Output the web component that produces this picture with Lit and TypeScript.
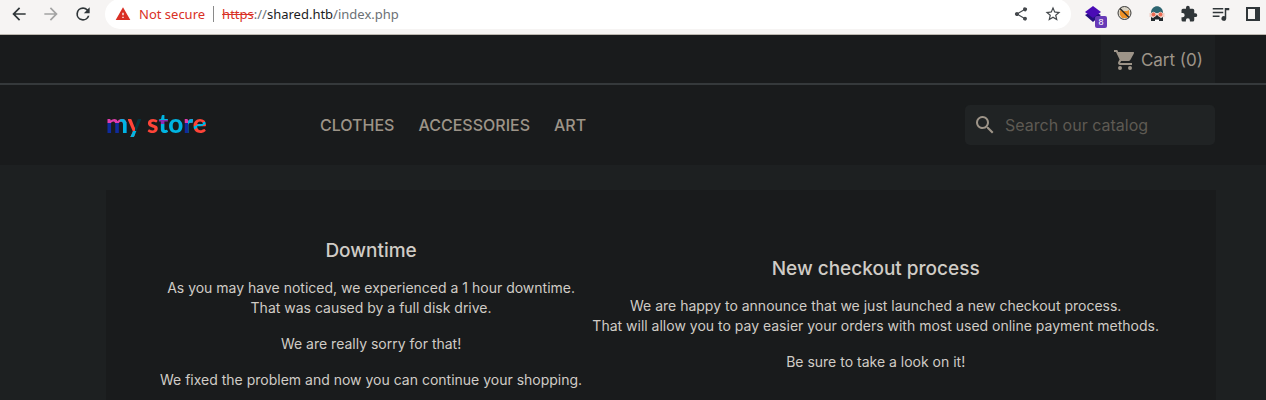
import { LitElement, html, css, svg } from "lit";
import { customElement } from "lit/decorators.js";

const icon = (size: number, body: unknown) =>
  html`<svg width=${size} height=${size} viewBox="0 0 24 24" fill="currentColor" aria-hidden="true">${body}</svg>`;

const glyphs = {
  back: svg`<path d="M20 11H7.83l5.59-5.59L12 4l-8 8 8 8 1.41-1.41L7.83 13H20v-2z"/>`,
  forward: svg`<path d="M12 4l-1.41 1.41L16.17 11H4v2h12.17l-5.58 5.59L12 20l8-8z"/>`,
  reload: svg`<path d="M17.65 6.35A7.96 7.96 0 0 0 12 4a8 8 0 1 0 7.73 10h-2.08A6 6 0 1 1 12 6c1.66 0 3.14.69 4.22 1.78L13 11h7V4l-2.35 2.35z"/>`,
  warning: svg`<path d="M1 21h22L12 2 1 21zm12-3h-2v-2h2v2zm0-4h-2v-4h2v4z"/>`,
  share: svg`<path d="M18 16.08c-.76 0-1.44.3-1.96.77L8.91 12.7a3.3 3.3 0 0 0 0-1.39l7.05-4.11A2.99 2.99 0 1 0 15 5c0 .24.04.47.09.7L8.04 9.81a3 3 0 1 0 0 4.38l7.12 4.16a2.92 2.92 0 1 0 2.84-2.27z"/>`,
  star: svg`<path d="M22 9.24l-7.19-.62L12 2 9.19 8.63 2 9.24l5.46 4.73L5.82 21 12 17.27 18.18 21l-1.63-7.03L22 9.24zM12 15.4l-3.76 2.27 1-4.28-3.32-2.88 4.38-.38L12 6.1l1.71 4.04 4.38.38-3.32 2.88 1 4.28L12 15.4z"/>`,
  puzzle: svg`<path d="M20.5 11H19V7a2 2 0 0 0-2-2h-4V3.5a2.5 2.5 0 0 0-5 0V5H4a2 2 0 0 0-2 2v3.8h1.5a2.7 2.7 0 0 1 0 5.4H2V20a2 2 0 0 0 2 2h3.8v-1.500a2.700 2.700 0 0 1 5.400 0V22H17a2 2 0 0 0 2-2v-4h1.500a2.500 2.500 0 0 0 0-5z"/>`,
  queue: svg`<path d="M1 4h14v2H1zM1 9h14v2H1zM1 14h9v2H1zM17 4h6v3h-4v11a3.200 3.200 0 1 1-2-3z"/>`,
  cart: svg`<path d="M7 18a2 2 0 1 0 0 4 2 2 0 0 0 0-4zM1 2v2h2l3.600 7.590-1.350 2.450C4.520 15.370 5.480 17 7 17h12v-2H7.420a.25.25 0 0 1-.25-.25l.03-.12.9-1.630h7.450c.75 0 1.410-.41 1.750-1.030l3.580-6.490A1 1 0 0 0 20 4H5.210l-.94-2H1zm16 16a2 2 0 1 0 0 4 2 2 0 0 0 0-4z"/>`,
  search: svg`<path d="M15.500 14h-.79l-.28-.27a6.500 6.500 0 1 0-.7.700l.27.280v.79l5 4.990L20.490 19l-4.990-5zm-6 0a4.500 4.500 0 1 1 0-9 4.500 4.500 0 0 1 0 9z"/>`,
};

@customElement("browser-bar")
class BrowserBar extends LitElement {
  static styles = css`
    :host { display: block; font-family: "Noto Sans", sans-serif; }
    .bar {
      box-sizing: border-box; height: 35px; padding: 0 4px 6px 9px; display: flex; align-items: center;
      background: #f6f4f3; border-bottom: 1px solid #bdb8b0; color: #303639;
    }
    button { border: 0; padding: 0; background: none; color: inherit; display: flex; }
    svg { display: block; }
    .nav { display: flex; gap: 12px; margin-right: 12px; }
    .off { color: #a3a3a3; }
    .address {
      flex: 1; height: 30px; border-radius: 15px; background: #fff; display: flex;
      align-items: center; font-size: 13px; gap: 8px; padding: 0 9px 0 10px;
      min-width: 0; white-space: nowrap;
    }
    .danger { color: #d93025; display: flex; align-items: center; gap: 8px; }
    .rule { width: 1px; height: 16px; background: #8a8a8a; }
    .url { flex: 1; color: #6c7175; }
    .url s { color: #d93025; }
    .url b { color: #1b1c1e; font-weight: 400; }
    .tools { display: flex; align-items: center; gap: 15px; color: #44484c; }
    .extensions { display: flex; gap: 14px; margin-left: 13px; align-items: center; }
    .blocks { position: relative; }
    .badge {
      position: absolute; left: 11px; top: 11px; width: 12px; height: 12px; border-radius: 2px;
      background: #673ab7; color: #fff; font-size: 9px; line-height: 12px; text-align: center;
    }
  `;

  render() {
    return html`
      <div class="bar">
        <div class="nav">
          <button aria-label="Back">${icon(20, glyphs.back)}</button>
          <button class="off" aria-label="Forward" disabled>${icon(20, glyphs.forward)}</button>
          <button aria-label="Reload">${icon(20, glyphs.reload)}</button>
        </div>
        <div class="address">
          <span class="danger">${icon(16, glyphs.warning)}Not secure</span>
          <span class="rule"></span>
          <span class="url"><s>https</s>://<b>shared.htb</b>/index.php</span>
          <span class="tools">
            <button aria-label="Share">${icon(16, glyphs.share)}</button>
            <button aria-label="Bookmark">${icon(18, glyphs.star)}</button>
          </span>
        </div>
        <div class="extensions">
          <button class="blocks" aria-label="Blocks">
            <svg width="18" height="18" viewBox="0 0 18 18"><path fill="#24107c" d="M1 10l4-2h8l4 2-8 7z"/><path fill="#4a0bb5" d="M1 7l8-6 8 6-8 6z"/></svg>
            <span class="badge">8</span>
          </button>
          <button aria-label="Proxy">
            <svg width="18" height="18" viewBox="0 0 18 18"><circle cx="8.500" cy="8" r="6.500" fill="#d9d3c5" stroke="#3c3c3a"/><path fill="#ee9226" d="M4 5l2 1h5l2-1v5l-2 3H6l-2-3z"/><path stroke="#2c2c2a" stroke-width="1.500" d="M4 3.500l9 9"/></svg>
          </button>
          <button aria-label="Disguise">
            <svg width="18" height="18" viewBox="0 0 18 18"><path fill="#2d6570" d="M3 8c0-9 12-9 12 0z"/><path fill="#f0cfc4" d="M1.500 8h15v4h-15z"/><path fill="#242a2e" d="M3 12l2 1 4-3 4 3 2-1v4H3z"/><path fill="#fff" d="M7 14.500h4V16H7z"/><g fill="#ec6a52" stroke="#f0cfc4" stroke-width=".8"><circle cx="5.500" cy="9.500" r="2.300"/><circle cx="12.500" cy="9.500" r="2.300"/></g></svg>
          </button>
          <button aria-label="Extensions">${icon(18, glyphs.puzzle)}</button>
          <button aria-label="Media">${icon(18, glyphs.queue)}</button>
          <button aria-label="Side panel">
            <svg width="18" height="18" viewBox="0 0 18 18"><path fill="#303639" fill-rule="evenodd" d="M2 2h14v14H2zM4 4v10h7V4z"/></svg>
          </button>
        </div>
      </div>
    `;
  }
}

@customElement("store-header")
class StoreHeader extends LitElement {
  static styles = css`
    :host { display: block; color: #9d9488; background: #191b1c; }
    a { color: inherit; text-decoration: none; }
    .inner { padding: 0 51px 0 106px; display: flex; align-items: center; }
    .top { height: 48px; justify-content: flex-end; border-bottom: 2px solid #35393b; }
    .cart {
      box-sizing: border-box; height: 48px; padding: 2px 12px 0; display: flex; align-items: center; gap: 4px;
      background: #1d2021; font-size: 17px;
    }
    .main { height: 80px; }
    .logo { width: 214px; padding-bottom: 4px; font: 900 26px/32px Lato, sans-serif; white-space: nowrap; }
    .logo span { background-clip: text; -webkit-background-clip: text; color: transparent; }
    .m { background-image: linear-gradient(90deg, transparent 62%, #00b5e2 62%), linear-gradient(#e03cae 50%, #0f2b9d 50%); }
    .y { background-image: linear-gradient(transparent 76%, #00b5e2 76%), linear-gradient(90deg, #ff4438 55%, #04363f 55%); }
    .s { background-image: linear-gradient(#ff4438, #ff4438); }
    .t { background-image: linear-gradient(#00b5e2 42%, #8a2bb4 42%, #8a2bb4 54%, #00b5e2 54%); }
    .o { background-image: linear-gradient(#00b5e2, #00b5e2); }
    .r { background-image: linear-gradient(90deg, transparent 55%, #00b5e2 55%), linear-gradient(#e03cae 50%, #0f2b9d 50%); }
    .e { background-image: linear-gradient(155deg, #ff4438 52%, #00b5e2 52%, #00b5e2 60%, #ff4438 60%); }
    nav { flex: 1; display: flex; gap: 24px; font-size: 16px; font-weight: 500; }
    .search {
      box-sizing: border-box; width: 250px; height: 40px; padding: 0 8px; border-radius: 5px;
      display: flex; align-items: center; gap: 8px; background: #202324;
    }
    input { flex: 1; min-width: 0; border: 0; padding: 0; background: none; color: inherit; font: inherit; font-size: 16px; outline: 0; }
    input::placeholder { color: #5e5a53; opacity: 1; }
  `;

  render() {
    return html`
      <header>
        <div class="inner top">
          <a class="cart" href="#cart">${icon(24, glyphs.cart)}<span>Cart (0)</span></a>
        </div>
        <div class="inner main">
          <a class="logo" href="#home"><span class="m">m</span><span class="y">y</span> <span class="s">s</span><span class="t">t</span><span class="o">o</span><span class="r">r</span><span class="e">e</span></a>
          <nav><a href="#clothes">CLOTHES</a><a href="#accessories">ACCESSORIES</a><a href="#art">ART</a></nav>
          <label class="search">${icon(24, glyphs.search)}<input type="text" placeholder="Search our catalog" aria-label="Search" /></label>
        </div>
      </header>
    `;
  }
}

@customElement("app-root")
class AppRoot extends LitElement {
  static styles = css`
    :host { display: block; height: 100vh; overflow: hidden; background: #1d2021; color: #d0ccc6; font-family: Inter, "Liberation Sans", sans-serif; }
    .notices {
      margin: 25px 50px 0 106px; padding: 50px 57px 80px 54px; background: #191b1c;
      display: flex; gap: 6px; justify-content: space-between; text-align: center; font-size: 14px; line-height: 20px;
    }
    .late { padding-top: 18px; }
    h2 { margin: 0 0 16px; font-size: 19px; line-height: 22px; font-weight: 500; }
    p { margin: 0 0 16px; white-space: nowrap; }
  `;

  render() {
    return html`
      <browser-bar></browser-bar>
      <store-header></store-header>
      <main class="notices">
        <article>
          <h2>Downtime</h2>
          <p>As you may have noticed, we experienced a 1 hour downtime.<br />That was caused by a full disk drive.</p>
          <p>We are really sorry for that!</p>
          <p>We fixed the problem and now you can continue your shopping.</p>
        </article>
        <article class="late">
          <h2>New checkout process</h2>
          <p>We are happy to announce that we just launched a new checkout process.<br />That will allow you to pay easier your orders with most used online payment methods.</p>
          <p>Be sure to take a look on it!</p>
        </article>
      </main>
    `;
  }
}
